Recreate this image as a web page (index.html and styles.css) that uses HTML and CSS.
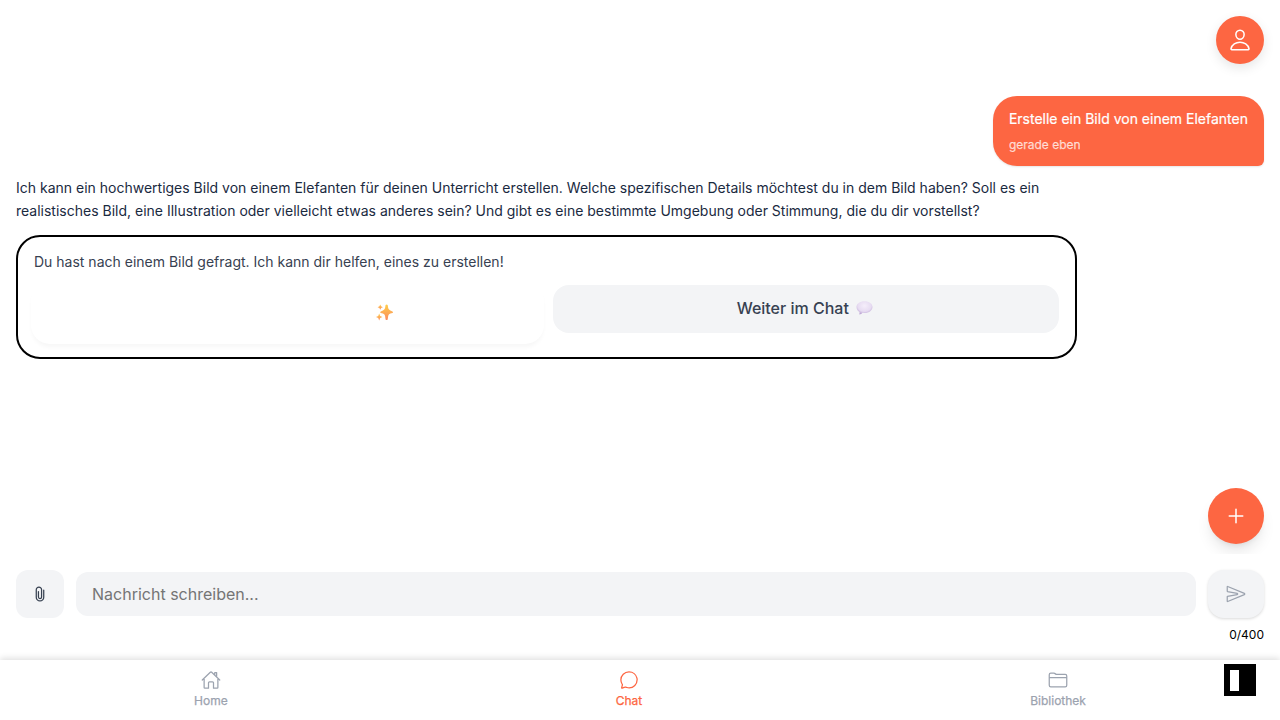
FILE: index.html
```html
<!DOCTYPE html>
<html lang="de">
<head>
<meta charset="utf-8">
<title>Chat</title>
<link rel="stylesheet" href="styles.css">
</head>
<body>
<div class="app">
  <header class="header">
    <button class="profile" aria-label="Profil">
      <svg class="icon icon-lg" viewBox="0 0 512 512"><path d="M344 144c-3.92 52.87-44 96-88 96s-84.15-43.12-88-96c-4-55 35-96 88-96s92 42 88 96z"/><path d="M256 304c-87 0-175.3 48-191.64 138.6C62.39 453.52 68.57 464 80 464h352c11.44 0 17.62-10.48 15.65-21.4C431.3 352 343 304 256 304z"/></svg>
    </button>
  </header>
  <main class="messages">
    <div class="bubble">
      <p class="bubble-text">Erstelle ein Bild von einem Elefanten</p>
      <p class="bubble-time">gerade eben</p>
    </div>
    <p class="reply">Ich kann ein hochwertiges Bild von einem Elefanten für deinen Unterricht erstellen. Welche spezifischen Details möchtest du in dem Bild haben? Soll es ein realistisches Bild, eine Illustration oder vielleicht etwas anderes sein? Und gibt es eine bestimmte Umgebung oder Stimmung, die du dir vorstellst?</p>
    <section class="card">
      <p class="card-text">Du hast nach einem Bild gefragt. Ich kann dir helfen, eines zu erstellen!</p>
      <div class="actions">
        <button class="action action-primary" aria-label="Bild erstellen">
          <svg class="emoji" viewBox="0 0 32 32">
            <defs><linearGradient id="spark" x1="0" y1="0" x2="0" y2="1"><stop offset="0" stop-color="#ffce48"/><stop offset="1" stop-color="#fb8b62"/></linearGradient></defs>
            <g fill="url(#spark)"><path d="M18 2Q20 0 22 2L23 8Q24 11 27 12L31 14Q33 15.500 31 17L27 18Q24 19 23 22L22 29Q20 31 18 29L17 22Q16 19 13 18L9 17Q7 15.500 9 14L13 12Q16 11 17 8Z"/><path d="M8 1l1.600 3.400L13 6 9.600 7.600 8 11 6.400 7.600 3 6l3.400-1.600z"/><path d="M6 18l1.800 4.700L12 24.500l-4.200 1.800L6 31l-1.800-4.700L0 24.500l4.200-1.800z"/></g>
          </svg>
        </button>
        <button class="action action-secondary">Weiter im Chat
          <svg class="emoji" viewBox="0 0 32 32">
            <defs><radialGradient id="speech" cx=".5" cy=".35" r=".65"><stop offset="0" stop-color="#f5eefa"/><stop offset=".65" stop-color="#e7dcf2"/><stop offset="1" stop-color="#bda6d4"/></radialGradient></defs>
            <path fill="url(#speech)" d="M16 4C7 4 1 9 1 15c0 4 2 7 5 9 1 1 1 3 0 5 3 0 5-1 6-3l4 .3c9 0 15-5 15-11.300S25 4 16 4z"/>
          </svg>
        </button>
      </div>
    </section>
    <div class="fab-row">
      <button class="fab" aria-label="Neu">
        <svg class="icon icon-lg" viewBox="0 0 512 512"><path d="M256 112v288M400 256H112"/></svg>
      </button>
    </div>
  </main>
  <footer class="composer">
    <div class="composer-row">
      <button class="attach" aria-label="Anhang">
        <svg class="icon" viewBox="0 0 512 512"><path d="M216.08 192v143.85a40.08 40.08 0 0080.15 0l.13-188.550a67.940 67.940 0 10-135.870 0v189.820a95.510 95.510 0 10191 0V159.740"/></svg>
      </button>
      <input class="field" placeholder="Nachricht schreiben...">
      <button class="send" aria-label="Senden">
        <svg class="icon" viewBox="0 0 512 512"><path d="M470.3 271.15L43.16 447.31a7.83 7.83 0 01-11.16-7V327a8 8 0 016.51-7.86l247.62-47c17.36-3.29 17.36-28.15 0-31.44l-247.63-47a8 8 0 01-6.5-7.85V72.59c0-5.74 5.88-10.26 11.16-8L470.3 241.76a16 16 0 010 29.39z"/></svg>
      </button>
    </div>
    <p class="counter">0/400</p>
  </footer>
  <nav class="tabs">
    <a class="tab"><svg class="icon" viewBox="0 0 512 512"><path d="M80 212v236a16 16 0 0016 16h96V328a24 24 0 0124-24h80a24 24 0 0124 24v136h96a16 16 0 0016-16V212M480 256L266.89 52c-5-5.28-16.69-5.34-21.78 0L32 256M400 179V64h-48v69"/></svg>Home</a>
    <a class="tab tab-active"><svg class="icon" viewBox="0 0 512 512"><path d="M87.49 380c1.190-4.380-1.440-10.470-3.950-14.860a44.860 44.860 0 00-2.540-3.800 199.810 199.810 0 01-33-110C47.650 139.090 140.730 48 255.830 48 356.210 48 440 117.540 459.580 209.850a199 199 0 014.420 41.640c0 112.410-89.490 204.930-204.590 204.930-18.300 0-43-4.600-56.470-8.370s-26.920-8.770-30.390-10.110a31.090 31.090 0 00-11.120-2.070 30.710 30.710 0 00-12.090 2.430l-67.830 24.480a16 16 0 01-4.670 1.220 9.600 9.600 0 01-9.570-9.740 15.850 15.850 0 01.600-3.290z"/></svg>Chat</a>
    <a class="tab"><svg class="icon" viewBox="0 0 512 512"><path d="M440 432H72a40 40 0 01-40-40V120a40 40 0 0140-40h75.890a40 40 0 0122.190 6.720l27.840 18.560a40 40 0 0022.190 6.720H440a40 40 0 0140 40v240a40 40 0 01-40 40zM32 192h448"/></svg>Bibliothek</a>
  </nav>
  <div class="badge"><span class="badge-bar"></span></div>
</div>
</body>
</html>
```
FILE: styles.css
```css
* { box-sizing: border-box; }
body { margin: 0; font-family: Inter, "Liberation Sans", sans-serif; color: #1a2a3f; background: #fff; }
p { margin: 0; }
button { border: 0; padding: 0; font: inherit; display: flex; align-items: center; justify-content: center; }
.app { position: relative; height: 720px; display: flex; flex-direction: column; overflow: hidden; }
.icon { display: block; width: 20px; height: 20px; fill: none; stroke: currentColor; stroke-width: 32px; stroke-linecap: round; stroke-linejoin: round; }
.icon-lg { width: 24px; height: 24px; }
.header { display: flex; justify-content: flex-end; padding: 16px 16px 0; height: 96px; }
.profile { width: 48px; height: 48px; border-radius: 50%; background: #fd6642; color: #fff; box-shadow: 0 4px 12px rgba(0,0,0,.1); }
.messages { height: 458px; padding: 0 16px; display: flex; flex-direction: column; overflow: hidden; }
.bubble { align-self: flex-end; height: 69.5px; padding: 12px 16px; border-radius: 24px 24px 6px 24px; background: #fd6642; color: #fff; box-shadow: 0 1px 2px rgba(0,0,0,.1); }
.bubble-text { font-size: 14px; line-height: 22.75px; -webkit-text-stroke: .2px currentColor; }
.bubble-time { margin-top: 6px; font-size: 12px; line-height: 16px; color: rgba(255,255,255,.7); -webkit-text-stroke: .25px currentColor; }
.reply { margin-top: 11.5px; width: 1061px; font-size: 14px; line-height: 22.75px; }
.card { margin-top: 12px; width: 1061px; height: 124px; padding: 14px 16px; border: 2px solid #000; border-radius: 24px; }
.card-text { font-size: 14px; line-height: 22.75px; color: #374151; }
.actions { display: grid; grid-template-columns: 1fr 1fr; gap: 12px; align-items: start; margin-top: 11.5px; }
.action { font-size: 16px; font-weight: 500; gap: 7px; }
.action-primary { height: 56px; padding-left: 195px; border-radius: 16px; background: #fff; box-shadow: 0 0 0 3px #fff, 0 4px 4px 2px rgba(0,0,0,.035); }
.action-secondary { height: 48px; padding: 0 2px 2px 0; border-radius: 16px; background: #f3f4f6; color: #374151; }
.emoji { width: 17px; height: 17px; }
.fab-row { margin-top: auto; display: flex; justify-content: flex-end; padding-bottom: 10px; margin-right: -16px; padding-right: 16px; }
.fab { width: 56px; height: 56px; border-radius: 50%; background: #fd6642; color: #fff; box-shadow: 0 10px 15px -3px rgba(0,0,0,.1), 0 4px 6px -4px rgba(0,0,0,.1); }
.composer { height: 106px; padding: 16px 16px 0; }
.composer-row { display: flex; align-items: center; gap: 12px; }
.attach, .send { width: 48px; height: 48px; flex: none; border-radius: 12px; background: #f3f4f6; color: #374151; }
.send { width: 56px; border-radius: 16px; color: #9ca3af; box-shadow: 0 1px 3px rgba(0,0,0,.15); }
.field { flex: 1; min-width: 0; height: 44px; border: 0; border-radius: 12px; padding: 0 16px; background: #f3f4f6; font: 16px Inter, sans-serif; }
.field::placeholder { color: #757575; }
.counter { margin-top: 8px; text-align: right; font-size: 12px; line-height: 18px; color: #000; }
.tabs { height: 60px; display: flex; justify-content: space-around; padding-top: 10px; background: #fff; box-shadow: 0 -2px 6px rgba(0,0,0,.12); }
.tab { display: flex; flex-direction: column; align-items: center; gap: 3px; font-size: 12px; line-height: 16px; color: #9ca3af; -webkit-text-stroke: .25px currentColor; }
.tab-active { color: #fd6642; }
.badge { position: absolute; right: 24px; bottom: 24px; width: 32px; height: 32px; padding: 6px; background: #000; }
.badge-bar { display: block; width: 9px; height: 21px; background: #fff; }
```
